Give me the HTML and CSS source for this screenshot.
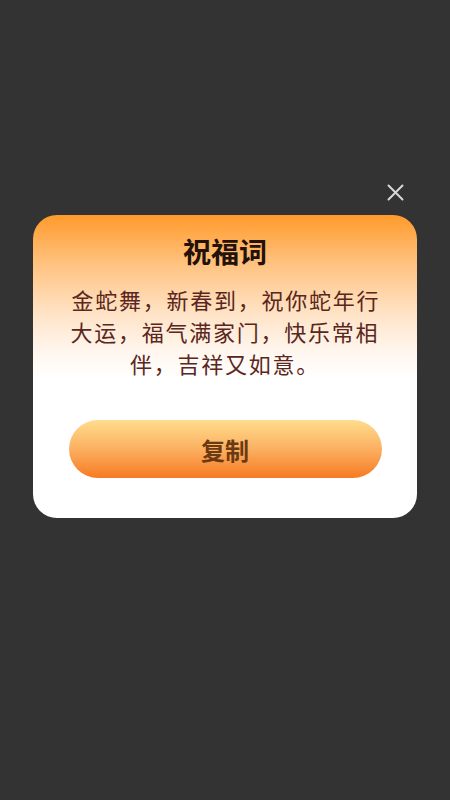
FILE: index.html
```html
<!DOCTYPE html>
<html lang="zh-CN">
<head>
<meta charset="utf-8">
<title>祝福词</title>
<link rel="stylesheet" href="styles.css">
</head>
<body>
<div class="overlay">
  <div class="close-row">
    <button class="close" aria-label="关闭">
      <svg width="17" height="17" viewBox="0 0 17 17"><path d="M1.5 1.5 L15.5 15.5 M15.5 1.5 L1.5 15.5" stroke="#d8d8d8" stroke-width="2" stroke-linecap="round" fill="none"/></svg>
    </button>
  </div>
  <div class="card">
    <h1 class="title">祝福词</h1>
    <p class="blessing">金蛇舞，新春到，祝你蛇年行大运，福气满家门，快乐常相伴，吉祥又如意。</p>
    <button class="copy-btn">复制</button>
  </div>
</div>
</body>
</html>
```
FILE: styles.css
```css
html, body {
  margin: 0;
  padding: 0;
  background: #333333;
  height: 100%;
}
body {
  font-family: "Noto Sans CJK SC", "Noto Sans", sans-serif;
}
.overlay {
  display: flex;
  flex-direction: column;
  align-items: center;
  padding-top: 184px;
}
.close-row {
  width: 384px;
  display: flex;
  justify-content: flex-end;
  box-sizing: border-box;
  padding-right: 13px;
  margin-bottom: 14px;
}
.close {
  width: 17px;
  height: 17px;
  padding: 0;
  border: 0;
  background: none;
  display: block;
}
.close svg { display: block; }
.card {
  width: 384px;
  height: 303px;
  box-sizing: border-box;
  border-radius: 24px;
  background: linear-gradient(180deg, #ff9a2b 0%, #ffc27f 16%, #ffe4c8 33%, #fff6ee 45%, #ffffff 54%);
  padding: 18px 0 40px;
  display: flex;
  flex-direction: column;
  align-items: center;
}
.title {
  margin: 0;
  font-size: 28px;
  line-height: 36px;
  font-weight: 700;
  color: #24110a;
  text-align: center;
}
.blessing {
  margin: 14px 0 0;
  width: 316px;
  font-size: 22px;
  line-height: 32px;
  letter-spacing: 1.75px;
  text-indent: 1.75px;
  color: #5a2620;
  text-align: center;
}
.copy-btn {
  margin-top: 41px;
  width: 313px;
  height: 58px;
  border: 0;
  border-radius: 29px;
  background: linear-gradient(180deg, #ffdc8d 0%, #fbb061 50%, #f77a22 100%);
  font-family: "Noto Sans CJK SC", "Noto Sans", sans-serif;
  font-size: 24px;
  font-weight: 700;
  color: #6b3a12;
  padding: 0;
}
```
